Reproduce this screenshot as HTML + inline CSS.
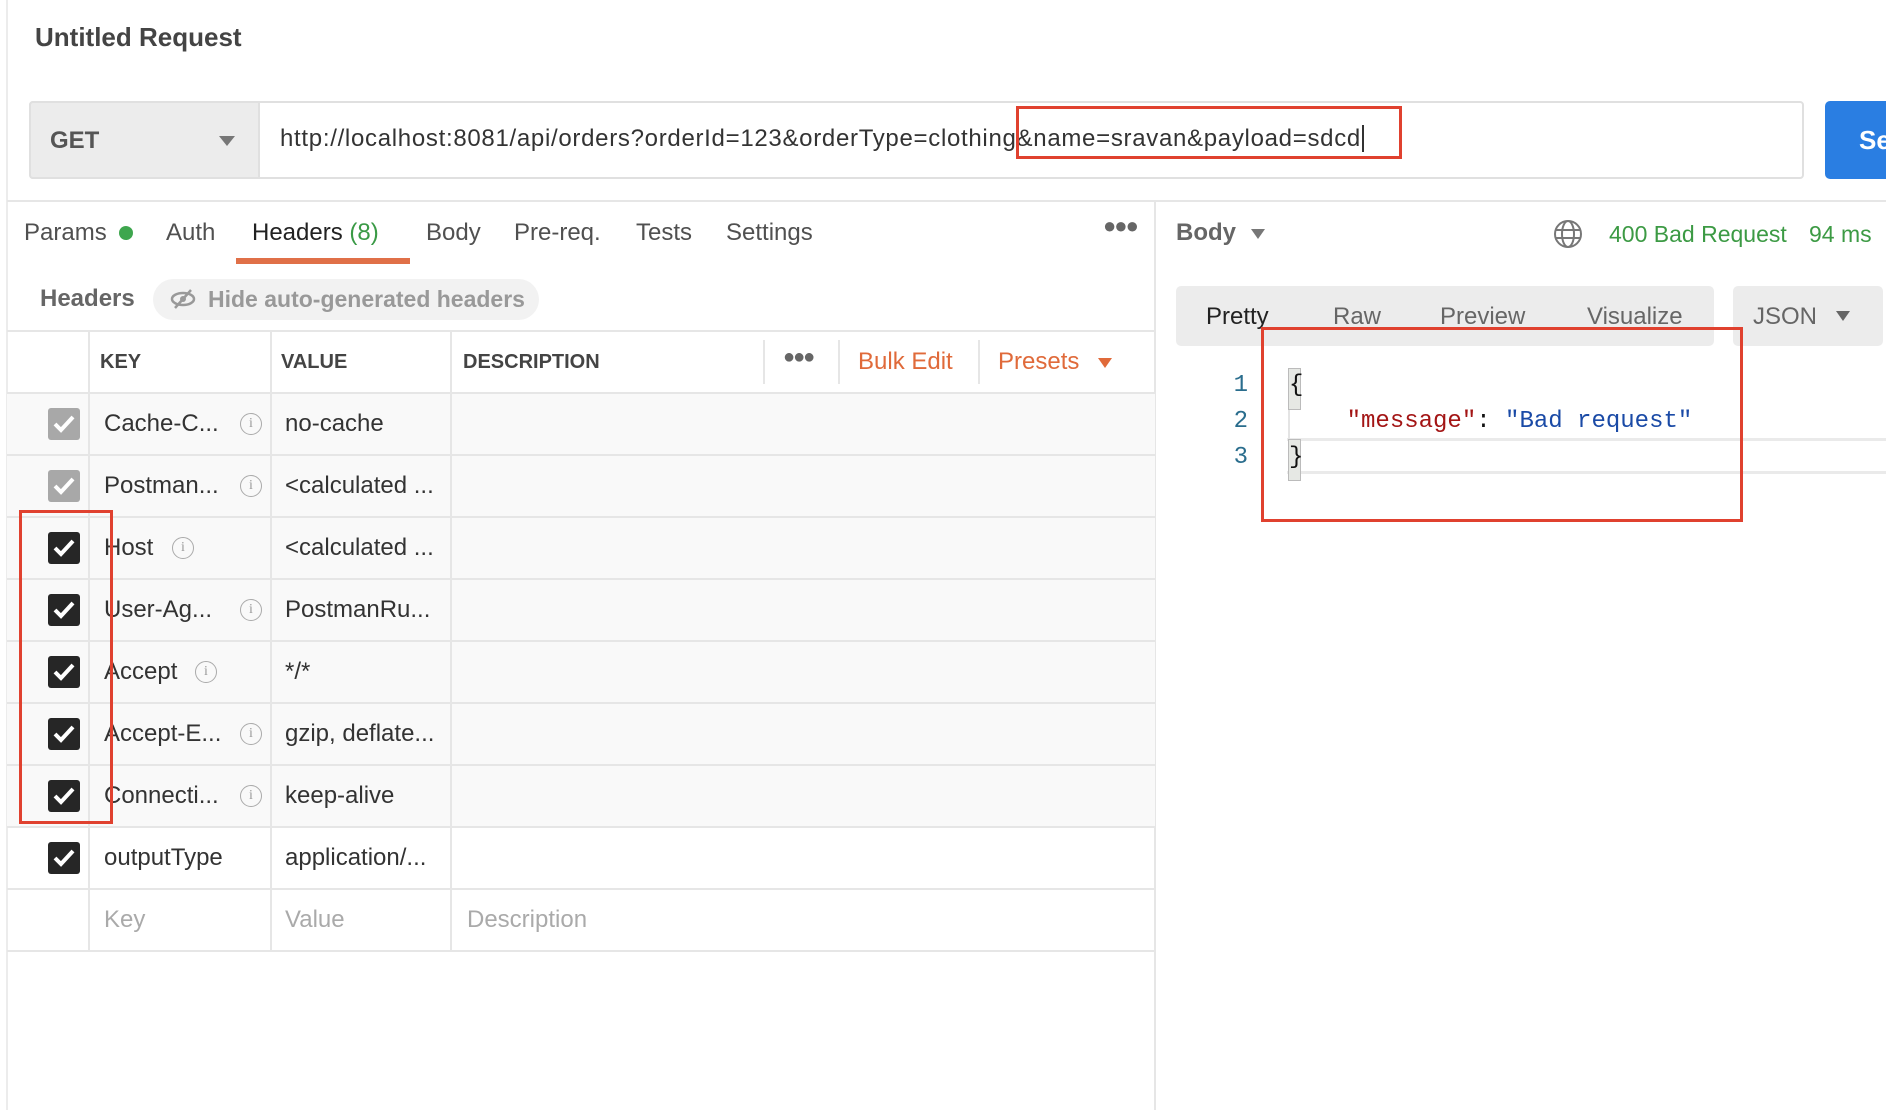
<!DOCTYPE html>
<html><head><meta charset="utf-8"><style>
*{margin:0;padding:0;box-sizing:border-box}
body{width:1886px;height:1110px;overflow:hidden;background:#fff;font-family:"Liberation Sans",Arial,sans-serif;color:#333;position:relative}
.a{position:absolute;white-space:nowrap}
.hl{position:absolute;height:2px;background:#e6e6e6}
.vl{position:absolute;width:2px;background:#e6e6e6}
.red{position:absolute;border:3px solid #e0412f}
.cb{position:absolute;left:48px;width:32px;height:32px;border-radius:3px;background:#262626}
.cb.g{background:#a8a8a8}
.cb svg{position:absolute;left:4px;top:5px}
.t{font-size:24px;color:#505050}
.info{position:absolute;width:22px;height:22px;border:1.5px solid #aaa;border-radius:50%;font-size:14px;color:#999;text-align:center;line-height:19px;font-family:"Liberation Serif",serif}
</style></head><body>
<div class="vl" style="left:6px;top:0;height:1110px;background:#ececec"></div>
<div class="a" style="left:35px;top:22px;font-size:26px;font-weight:bold;color:#444">Untitled Request</div>

<div class="a" style="left:29px;top:101px;width:1775px;height:78px;border:2px solid #e0e0e0;border-radius:4px;background:#fff"></div>
<div class="a" style="left:29px;top:101px;width:231px;height:78px;border:2px solid #e0e0e0;border-radius:4px 0 0 4px;background:#ececec"></div>
<div class="a" style="left:50px;top:127px;font-size:24px;font-weight:bold;color:#555">GET</div>
<div class="a" style="left:219px;top:136px;width:0;height:0;border-left:8px solid transparent;border-right:8px solid transparent;border-top:10px solid #777"></div>
<div class="a" style="left:280px;top:125px;font-size:24px;color:#333;letter-spacing:0.7px">http://localhost:8081/api/orders?orderId=123&amp;orderType=clothing&amp;name=sravan&amp;payload=sdcd<span style="border-left:2px solid #333;margin-left:1px"></span></div>
<div class="a" style="left:1825px;top:101px;width:80px;height:78px;border-radius:5px;background:#2a7ee2"></div>
<div class="a" style="left:1859px;top:125px;font-size:26px;font-weight:bold;color:#fff">Se</div>
<div class="red" style="left:1016px;top:106px;width:386px;height:53px"></div>

<div class="hl" style="left:7px;top:200px;width:1879px"></div>
<div class="vl" style="left:1154px;top:200px;height:910px"></div>

<div class="a t" style="left:24px;top:219px">Params</div>
<div class="a" style="left:119px;top:226px;width:14px;height:14px;border-radius:50%;background:#3ea64e"></div>
<div class="a t" style="left:166px;top:219px">Auth</div>
<div class="a t" style="left:252px;top:219px;color:#222">Headers <span style="color:#3a9a46">(8)</span></div>
<div class="a" style="left:236px;top:258px;width:174px;height:6px;background:#e07048"></div>
<div class="a t" style="left:426px;top:219px">Body</div>
<div class="a t" style="left:514px;top:219px">Pre-req.</div>
<div class="a t" style="left:636px;top:219px">Tests</div>
<div class="a t" style="left:726px;top:219px">Settings</div>
<div class="a" style="left:1103px;top:213px;font-size:22px;color:#666;letter-spacing:-2px">●●●</div>

<div class="a" style="left:40px;top:285px;font-size:24px;font-weight:bold;color:#666">Headers</div>
<div class="a" style="left:153px;top:279px;width:386px;height:41px;border-radius:21px;background:#f2f2f2"></div>
<svg class="a" style="left:170px;top:288px" width="26" height="22" viewBox="0 0 26 22"><ellipse cx="13" cy="11" rx="11" ry="6" fill="none" stroke="#999" stroke-width="2.5"/><circle cx="13" cy="11" r="3" fill="#999"/><line x1="5" y1="20" x2="21" y2="2" stroke="#999" stroke-width="2.5"/></svg>
<div class="a" style="left:208px;top:286px;font-size:23px;font-weight:bold;color:#999">Hide auto-generated headers</div>

<div class="hl" style="left:7px;top:330px;width:1148px"></div>
<div class="vl" style="left:763px;top:340px;height:44px"></div>
<div class="vl" style="left:838px;top:340px;height:44px"></div>
<div class="vl" style="left:978px;top:340px;height:44px"></div>
<div class="a" style="left:100px;top:351px;font-size:20px;font-weight:bold;color:#444">KEY</div>
<div class="a" style="left:281px;top:351px;font-size:20px;font-weight:bold;color:#444">VALUE</div>
<div class="a" style="left:463px;top:351px;font-size:20px;font-weight:bold;color:#444">DESCRIPTION</div>
<div class="a" style="left:783px;top:346px;font-size:20px;color:#666;letter-spacing:-2px">●●●</div>
<div class="a" style="left:858px;top:348px;font-size:24px;color:#e06a3a">Bulk Edit</div>
<div class="a" style="left:998px;top:348px;font-size:24px;color:#e06a3a">Presets</div>
<div class="a" style="left:1098px;top:358px;width:0;height:0;border-left:7px solid transparent;border-right:7px solid transparent;border-top:10px solid #e06a3a"></div>

<div class="a" style="left:7px;top:393px;width:1148px;height:434px;background:#f9f9f9"></div>
<div class="hl" style="left:7px;top:392px;width:1148px"></div>
<div class="hl" style="left:7px;top:454px;width:1148px"></div>
<div class="hl" style="left:7px;top:516px;width:1148px"></div>
<div class="hl" style="left:7px;top:578px;width:1148px"></div>
<div class="hl" style="left:7px;top:640px;width:1148px"></div>
<div class="hl" style="left:7px;top:702px;width:1148px"></div>
<div class="hl" style="left:7px;top:764px;width:1148px"></div>
<div class="hl" style="left:7px;top:826px;width:1148px"></div>
<div class="hl" style="left:7px;top:888px;width:1148px"></div>
<div class="hl" style="left:7px;top:950px;width:1148px"></div>
<div class="vl" style="left:88px;top:331px;height:620px"></div>
<div class="vl" style="left:270px;top:331px;height:620px"></div>
<div class="vl" style="left:450px;top:331px;height:620px"></div>

<div class="cb g" style="top:408px"><svg width="24" height="22"><path d="M3 11 L9 17 L21 4" fill="none" stroke="#fff" stroke-width="4"/></svg></div>
<div class="cb g" style="top:470px"><svg width="24" height="22"><path d="M3 11 L9 17 L21 4" fill="none" stroke="#fff" stroke-width="4"/></svg></div>
<div class="cb" style="top:532px"><svg width="24" height="22"><path d="M3 11 L9 17 L21 4" fill="none" stroke="#fff" stroke-width="4"/></svg></div>
<div class="cb" style="top:594px"><svg width="24" height="22"><path d="M3 11 L9 17 L21 4" fill="none" stroke="#fff" stroke-width="4"/></svg></div>
<div class="cb" style="top:656px"><svg width="24" height="22"><path d="M3 11 L9 17 L21 4" fill="none" stroke="#fff" stroke-width="4"/></svg></div>
<div class="cb" style="top:718px"><svg width="24" height="22"><path d="M3 11 L9 17 L21 4" fill="none" stroke="#fff" stroke-width="4"/></svg></div>
<div class="cb" style="top:780px"><svg width="24" height="22"><path d="M3 11 L9 17 L21 4" fill="none" stroke="#fff" stroke-width="4"/></svg></div>
<div class="cb" style="top:842px"><svg width="24" height="22"><path d="M3 11 L9 17 L21 4" fill="none" stroke="#fff" stroke-width="4"/></svg></div>

<div class="a t" style="left:104px;top:410px;color:#333">Cache-C...</div><div class="info" style="left:240px;top:413px">i</div><div class="a t" style="left:285px;top:410px;color:#333">no-cache</div>
<div class="a t" style="left:104px;top:472px;color:#333">Postman...</div><div class="info" style="left:240px;top:475px">i</div><div class="a t" style="left:285px;top:472px;color:#333">&lt;calculated ...</div>
<div class="a t" style="left:104px;top:534px;color:#333">Host</div><div class="info" style="left:172px;top:537px">i</div><div class="a t" style="left:285px;top:534px;color:#333">&lt;calculated ...</div>
<div class="a t" style="left:104px;top:596px;color:#333">User-Ag...</div><div class="info" style="left:240px;top:599px">i</div><div class="a t" style="left:285px;top:596px;color:#333">PostmanRu...</div>
<div class="a t" style="left:104px;top:658px;color:#333">Accept</div><div class="info" style="left:195px;top:661px">i</div><div class="a t" style="left:285px;top:658px;color:#333">*/*</div>
<div class="a t" style="left:104px;top:720px;color:#333">Accept-E...</div><div class="info" style="left:240px;top:723px">i</div><div class="a t" style="left:285px;top:720px;color:#333">gzip, deflate...</div>
<div class="a t" style="left:104px;top:782px;color:#333">Connecti...</div><div class="info" style="left:240px;top:785px">i</div><div class="a t" style="left:285px;top:782px;color:#333">keep-alive</div>
<div class="a t" style="left:104px;top:844px;color:#333">outputType</div><div class="a t" style="left:285px;top:844px;color:#333">application/...</div>
<div class="a t" style="left:104px;top:906px;color:#aaa">Key</div><div class="a t" style="left:285px;top:906px;color:#aaa">Value</div><div class="a t" style="left:467px;top:906px;color:#aaa">Description</div>
<div class="red" style="left:19px;top:510px;width:94px;height:314px"></div>

<div class="a" style="left:1176px;top:219px;font-size:24px;font-weight:bold;color:#666">Body</div>
<div class="a" style="left:1251px;top:229px;width:0;height:0;border-left:7px solid transparent;border-right:7px solid transparent;border-top:10px solid #777"></div>
<svg class="a" style="left:1553px;top:219px" width="30" height="30" viewBox="0 0 30 30"><g fill="none" stroke="#777" stroke-width="2"><circle cx="15" cy="15" r="13"/><ellipse cx="15" cy="15" rx="6" ry="13"/><line x1="2" y1="11" x2="28" y2="11"/><line x1="2" y1="19" x2="28" y2="19"/></g></svg>
<div class="a" style="left:1609px;top:221px;font-size:23px;color:#3c9a44">400 Bad Request</div>
<div class="a" style="left:1809px;top:221px;font-size:23px;color:#3c9a44">94 ms</div>

<div class="a" style="left:1176px;top:286px;width:538px;height:60px;border-radius:5px;background:#ececec"></div>
<div class="a" style="left:1206px;top:303px;font-size:24px;color:#222">Pretty</div>
<div class="a" style="left:1333px;top:303px;font-size:24px;color:#666">Raw</div>
<div class="a" style="left:1440px;top:303px;font-size:24px;color:#666">Preview</div>
<div class="a" style="left:1587px;top:303px;font-size:24px;color:#666">Visualize</div>
<div class="a" style="left:1733px;top:286px;width:150px;height:60px;border-radius:5px;background:#ececec"></div>
<div class="a" style="left:1753px;top:303px;font-size:24px;color:#666">JSON</div>
<div class="a" style="left:1836px;top:311px;width:0;height:0;border-left:7px solid transparent;border-right:7px solid transparent;border-top:10px solid #666"></div>

<div class="a" style="left:1287px;top:438px;width:599px;height:36px;border-top:3px solid #eaeaea;border-bottom:3px solid #eaeaea"></div>
<div class="a" style="left:1288px;top:370px;width:2px;height:100px;background:#e4e4e4"></div>
<div class="a" style="left:1288px;top:368px;width:13px;height:42px;background:#e6e8e4;border:1px solid #bbb"></div>
<div class="a" style="left:1288px;top:439px;width:13px;height:42px;background:#e6e8e4;border:1px solid #bbb"></div>
<div class="a" style="left:1228px;top:368px;font-family:'Liberation Mono',monospace;font-size:24px;line-height:36px;color:#2a6d8d;text-align:right;width:20px">1<br>2<br>3</div>
<div class="a" style="left:1289px;top:368px;font-family:'Liberation Mono',monospace;font-size:24px;line-height:36px;color:#111">{<br>&nbsp;&nbsp;&nbsp;&nbsp;<span style="color:#a31515">"message"</span>: <span style="color:#1a4aa6">"Bad request"</span><br>}</div>
<div class="red" style="left:1261px;top:327px;width:482px;height:195px"></div>
</body></html>
